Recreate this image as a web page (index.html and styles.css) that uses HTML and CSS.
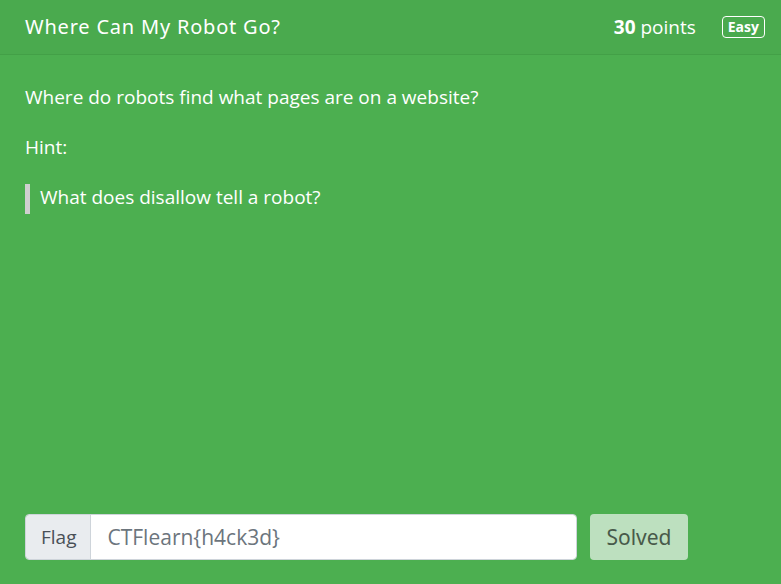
FILE: index.html
```html
<!DOCTYPE html>
<html>
<head>
<meta charset="utf-8">
<link rel="stylesheet" href="styles.css">
</head>
<body>
<div class="card">
  <div class="card-header">
    <div class="title">Where Can My Robot Go?</div>
    <div class="meta">
      <span class="points"><b>30</b> points</span>
      <span class="badge">Easy</span>
    </div>
  </div>
  <div class="card-body">
    <p class="text">Where do robots find what pages are on a website?</p>
    <p class="text">Hint:</p>
    <blockquote class="hint">What does disallow tell a robot?</blockquote>
    <div class="spacer"></div>
    <form class="flag-form">
      <div class="input-group">
        <span class="addon">Flag</span>
        <input class="flag-input" type="text" value="CTFlearn{h4ck3d}">
      </div>
      <button class="solved" type="button" disabled>Solved</button>
    </form>
  </div>
</div>
</body>
</html>
```
FILE: styles.css
```css
html, body {
  margin: 0;
  padding: 0;
  height: 100%;
}
body {
  background: #4caf50;
  font-family: "Open Sans", "Noto Sans", sans-serif;
  color: #fff;
}
.card {
  height: 584px;
  display: flex;
  flex-direction: column;
}
.card-header {
  height: 54px;
  box-sizing: content-box;
  border-bottom: 1px solid #43a047;
  background: #4aaa4e;
  display: flex;
  align-items: center;
  justify-content: space-between;
  padding: 0 16px 0 25px;
}
.title {
  font-family: "Noto Sans", sans-serif;
  font-size: 20px;
  letter-spacing: 0.8px;
  margin-top: -2px;
}
.meta {
  display: flex;
  align-items: center;
  gap: 26px;
}
.points {
  font-size: 19px;
}
.points b {
  font-weight: 700;
}
.badge {
  border: 1px solid #fff;
  border-radius: 4px;
  font-size: 14px;
  font-weight: 700;
  padding: 2px 5px;
  line-height: 16px;
}
.card-body {
  flex: 1;
  display: flex;
  flex-direction: column;
  padding: 30px 25px 24px;
}
.text {
  margin: 0 0 25px;
  font-size: 19px;
  line-height: 25px;
}
.hint {
  margin: -1px 0 0;
  border-left: 5px solid #cfcfcf;
  padding: 1px 0 4px 10px;
  font-size: 19px;
  line-height: 25px;
}
.spacer {
  flex: 1;
}
.flag-form {
  display: flex;
  gap: 13px;
  height: 46px;
}
.input-group {
  display: flex;
  width: 552px;
  border: 1px solid #ced4da;
  border-radius: 4px;
  overflow: hidden;
  box-sizing: border-box;
}
.addon {
  background: #e9ecef;
  color: #495057;
  border-right: 1px solid #ced4da;
  font-size: 19px;
  display: flex;
  align-items: center;
  padding: 0 14px 0 15px;
}
.flag-input {
  flex: 1;
  border: 0;
  background: #fff;
  color: #6c757d;
  font-family: "Open Sans", sans-serif;
  font-size: 21px;
  padding: 0 16px;
  outline: none;
}
.solved {
  width: 98px;
  border: 0;
  border-radius: 4px;
  background: #bde0bf;
  color: #485a4a;
  font-family: "Noto Sans", sans-serif;
  font-size: 21px;
}
```
